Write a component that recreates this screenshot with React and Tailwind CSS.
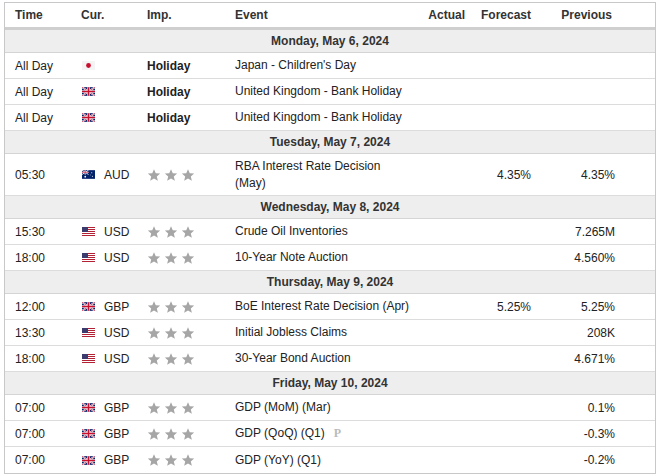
const UK = () => (
  <svg width="13" height="9" viewBox="0 0 60 40" className="shrink-0">
    <rect width="60" height="40" fill="#012169" />
    <path d="M0,0 L60,40 M60,0 L0,40" stroke="#fff" strokeWidth="8" />
    <path d="M0,0 L60,40 M60,0 L0,40" stroke="#C8102E" strokeWidth="3" />
    <path d="M30,0 V40 M0,20 H60" stroke="#fff" strokeWidth="12" />
    <path d="M30,0 V40 M0,20 H60" stroke="#C8102E" strokeWidth="7" />
  </svg>
);
const JP = () => (
  <svg width="13" height="9" viewBox="0 0 60 40" className="shrink-0">
    <rect width="60" height="40" fill="#f4f4f4" />
    <circle cx="30" cy="20" r="11" fill="#c8102e" />
  </svg>
);
const US = () => (
  <svg width="13" height="9" viewBox="0 0 13 9" className="shrink-0">
    <rect width="13" height="9" fill="#fff" />
    {[0, 2, 4, 6, 8].map((y) => (
      <rect key={y} y={y} width="13" height="1" fill="#b22234" />
    ))}
    <rect width="6" height="5" fill="#3c3b6e" />
  </svg>
);
const AU = () => (
  <svg width="13" height="9" viewBox="0 0 60 40" className="shrink-0">
    <rect width="60" height="40" fill="#012169" />
    <path d="M0,0 L30,20 M30,0 L0,20" stroke="#fff" strokeWidth="4" />
    <path d="M15,0 V20 M0,10 H30" stroke="#fff" strokeWidth="6" />
    <path d="M15,0 V20 M0,10 H30" stroke="#C8102E" strokeWidth="3" />
    <circle cx="15" cy="30" r="4" fill="#fff" />
    <circle cx="45" cy="12" r="2.5" fill="#fff" />
    <circle cx="48" cy="28" r="2.5" fill="#fff" />
    <circle cx="40" cy="22" r="2" fill="#fff" />
  </svg>
);
const Star = () => (
  <svg width="14" height="14" viewBox="0 0 24 24">
    <path d="M12 2l3 7 7.5.6-5.7 4.9 1.8 7.5L12 18l-6.6 4 1.8-7.5L1.5 9.6 9 9z" fill="#a6a6a6" />
  </svg>
);
const flags = { JP: <JP />, UK: <UK />, US: <US />, AU: <AU /> };

const data = [
  { date: "Monday, May 6, 2024" },
  { t: "All Day", f: "JP", hol: true, e: "Japan - Children's Day" },
  { t: "All Day", f: "UK", hol: true, e: "United Kingdom - Bank Holiday" },
  { t: "All Day", f: "UK", hol: true, e: "United Kingdom - Bank Holiday" },
  { date: "Tuesday, May 7, 2024" },
  { t: "05:30", f: "AU", c: "AUD", e: "RBA Interest Rate Decision (May)", fc: "4.35%", p: "4.35%", tall: true },
  { date: "Wednesday, May 8, 2024" },
  { t: "15:30", f: "US", c: "USD", e: "Crude Oil Inventories", p: "7.265M" },
  { t: "18:00", f: "US", c: "USD", e: "10-Year Note Auction", p: "4.560%" },
  { date: "Thursday, May 9, 2024" },
  { t: "12:00", f: "UK", c: "GBP", e: "BoE Interest Rate Decision (Apr)", fc: "5.25%", p: "5.25%" },
  { t: "13:30", f: "US", c: "USD", e: "Initial Jobless Claims", p: "208K" },
  { t: "18:00", f: "US", c: "USD", e: "30-Year Bond Auction", p: "4.671%" },
  { date: "Friday, May 10, 2024" },
  { t: "07:00", f: "UK", c: "GBP", e: "GDP (MoM) (Mar)", p: "0.1%" },
  { t: "07:00", f: "UK", c: "GBP", e: "GDP (QoQ) (Q1)", p: "-0.3%", prelim: true },
  { t: "07:00", f: "UK", c: "GBP", e: "GDP (YoY) (Q1)", p: "-0.2%" },
];

export default function App() {
  return (
    <div className="w-[660px] h-[474px] bg-white pt-[2px] pl-[4px]" style={{ fontFamily: "Arial, 'Liberation Sans', sans-serif" }}>
      <div className="w-[652px] border border-[#c8c8c8] text-[12px] text-[#222]">
        <div className="flex items-center h-[27px] font-bold text-[#333] border-b-[3px] border-[#cfcfcf]">
          <div className="w-[68px] pl-[10px]">Time</div>
          <div className="w-[65px] pl-[8px]">Cur.</div>
          <div className="w-[88px] pl-[9px]">Imp.</div>
          <div className="w-[197px] pl-[9px]">Event</div>
          <div className="w-[42px] text-right">Actual</div>
          <div className="w-[66px] text-right">Forecast</div>
          <div className="w-[81px] text-right">Previous</div>
        </div>
        {data.map((r, i) =>
          r.date ? (
            <div key={i} className="h-[23px] flex items-center justify-center font-bold bg-[#eeeeee] text-[#333] border-b border-[#d4d4d4]">
              {r.date}
            </div>
          ) : (
            <div key={i} className={`flex items-center border-b border-[#dcdcdc] last:border-b-0 ${r.tall ? "h-[42px]" : "h-[26px]"}`}>
              <div className="w-[68px] pl-[10px]">{r.t}</div>
              <div className="w-[65px] pl-[9px] flex items-center gap-[9px]">
                {flags[r.f]}
                {r.c && <span>{r.c}</span>}
              </div>
              <div className="w-[88px] pl-[9px] flex gap-[3px] items-center">
                {r.hol ? <span className="font-bold">Holiday</span> : <><Star /><Star /><Star /></>}
              </div>
              <div className="w-[197px] pl-[9px] leading-[17px] flex items-center">
                <span className={r.tall ? "w-[165px]" : ""}>{r.e}</span>
                {r.prelim && <span className="ml-[9px] text-[#bbb] font-bold" style={{ fontFamily: "'Liberation Serif', serif" }}>P</span>}
              </div>
              <div className="w-[42px]" />
              <div className="w-[66px] text-right">{r.fc}</div>
              <div className="w-[84px] text-right">{r.p}</div>
            </div>
          )
        )}
      </div>
    </div>
  );
}
